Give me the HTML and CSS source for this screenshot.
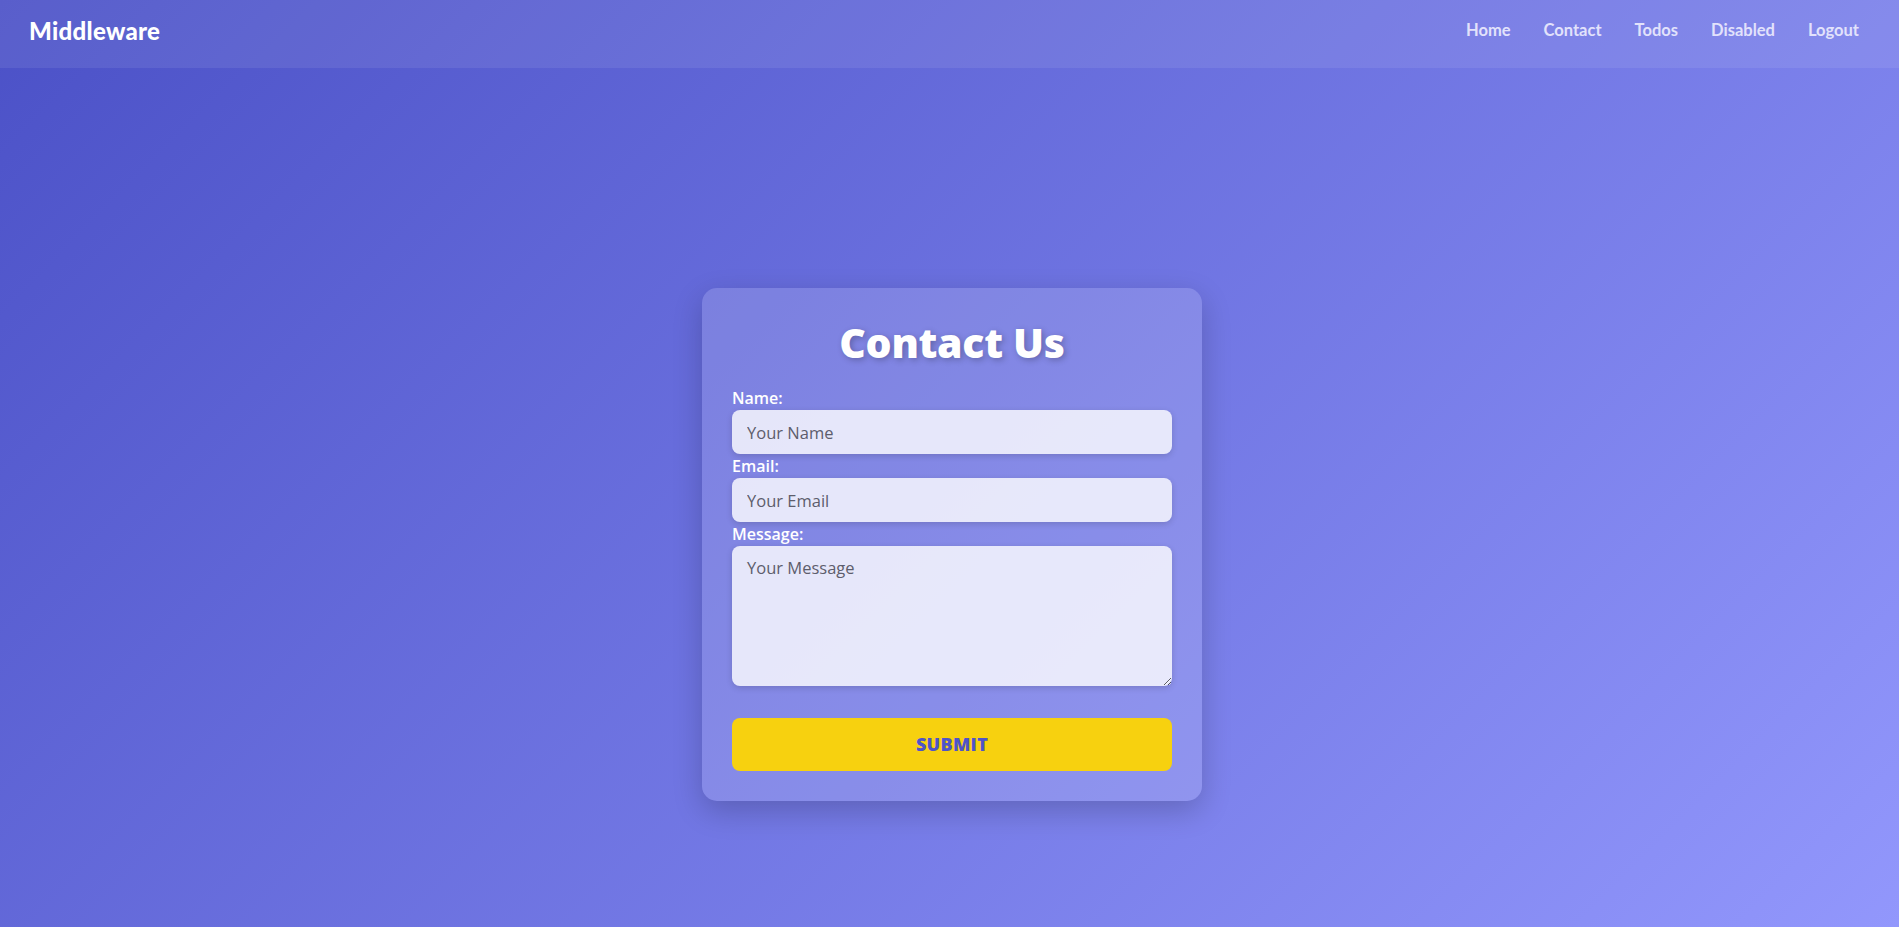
FILE: index.html
```html
<!DOCTYPE html>
<html lang="en">
<head>
<meta charset="utf-8">
<title>Middleware - Contact</title>
<link rel="stylesheet" href="styles.css">
</head>
<body>
<nav class="navbar">
  <a class="brand" href="#">Middleware</a>
  <ul class="nav-links">
    <li><a href="#">Home</a></li>
    <li><a href="#">Contact</a></li>
    <li><a href="#">Todos</a></li>
    <li><a href="#">Disabled</a></li>
    <li><a href="#">Logout</a></li>
  </ul>
</nav>
<main class="page">
  <form class="card">
    <h2 class="card-title">Contact Us</h2>
    <label class="field-label" for="name">Name:</label>
    <input class="field" id="name" type="text" placeholder="Your Name">
    <label class="field-label" for="email">Email:</label>
    <input class="field" id="email" type="email" placeholder="Your Email">
    <label class="field-label" for="message">Message:</label>
    <textarea class="field field-area" id="message" placeholder="Your Message"></textarea>
    <button class="submit" type="button">SUBMIT</button>
  </form>
</main>
</body>
</html>
```
FILE: styles.css
```css
* { box-sizing: border-box; }
html, body { height: 100%; }
body {
  margin: 0;
  min-height: 100vh;
  display: flex;
  flex-direction: column;
  background: linear-gradient(135deg, #4b51c7 0%, #9297fc 100%);
  font-family: "Open Sans", "DejaVu Sans", sans-serif;
  overflow: hidden;
}
.navbar {
  height: 68px;
  display: flex;
  align-items: center;
  justify-content: space-between;
  padding: 0 40px 8px 29px;
  background: rgba(255, 255, 255, 0.08);
}
.brand {
  font-family: "Lato", "Open Sans", sans-serif;
  font-weight: 900;
  font-size: 24px;
  color: #ffffff;
  text-decoration: none;
  letter-spacing: 0.3px;
}
.nav-links {
  list-style: none;
  display: flex;
  gap: 33px;
  margin: 0;
  padding: 0;
}
.nav-links a {
  font-family: "Lato", "Open Sans", sans-serif;
  font-weight: 700;
  font-size: 16.5px;
  color: #e2e2fb;
  text-decoration: none;
}
.page {
  flex: 1;
  display: flex;
  justify-content: center;
  align-items: flex-start;
  padding: 220px 0 0 5px;
}
.card {
  width: 500px;
  padding: 30px;
  display: flex;
  flex-direction: column;
  background: rgba(255, 255, 255, 0.15);
  border-radius: 15px;
  box-shadow: 0 10px 30px rgba(0, 0, 0, 0.2);
}
.card-title {
  margin: 0 0 20px;
  font-size: 41px;
  line-height: 48px;
  font-weight: 800;
  text-align: center;
  color: #ffffff;
  text-shadow: 2px 2px 6px rgba(0, 0, 0, 0.25);
  letter-spacing: -0.3px;
}
.field-label {
  display: block;
  font-size: 16px;
  line-height: 24px;
  font-weight: 600;
  color: #ffffff;
}
.field {
  width: 100%;
  height: 44px;
  border: none;
  border-radius: 8px;
  padding: 0 15px;
  font-family: inherit;
  font-size: 16.5px;
  color: #333;
  background: rgba(255, 255, 255, 0.8);
  box-shadow: 0 2px 6px rgba(0, 0, 0, 0.15);
  outline: none;
}
.field::placeholder { color: #5d5d6c; }
.field-area {
  height: 140px;
  padding: 10px 15px;
  resize: vertical;
  display: block;
}
.submit {
  margin-top: 32px;
  height: 53px;
  border: none;
  border-radius: 8px;
  background: #f7d10f;
  color: #4e54c8;
  font-family: inherit;
  font-weight: 800;
  font-size: 18px;
  letter-spacing: 0.3px;
  cursor: pointer;
  padding-bottom: 2px;
}
```
